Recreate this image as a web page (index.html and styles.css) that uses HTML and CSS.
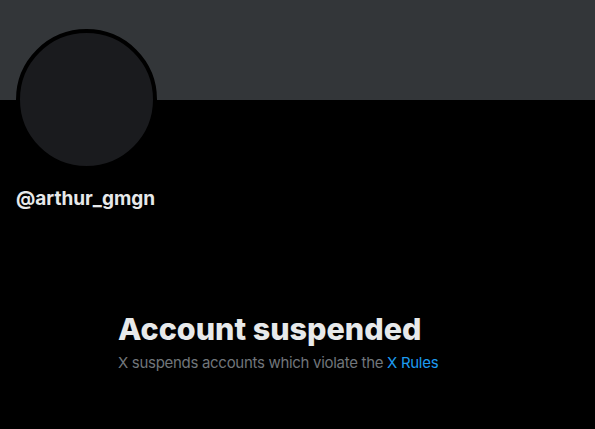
FILE: index.html
```html
<!DOCTYPE html>
<html>
<head>
<meta charset="utf-8">
<link rel="stylesheet" href="styles.css">
</head>
<body>
<div class="page">
  <div class="banner"></div>
  <div class="profile">
    <div class="avatar"></div>
    <div class="handle">@arthur_gmgn</div>
  </div>
  <div class="notice">
    <h1 class="title">Account suspended</h1>
    <p class="desc">X suspends accounts which violate the <a class="link" href="#">X Rules</a></p>
  </div>
</div>
</body>
</html>
```
FILE: styles.css
```css
html, body {
  margin: 0;
  padding: 0;
  background: #000;
}
body {
  width: 595px;
  height: 429px;
  overflow: hidden;
  font-family: Inter, "Liberation Sans", Arial, sans-serif;
  color: #e7e9ea;
}
.page {
  display: flex;
  flex-direction: column;
}
.banner {
  height: 100px;
  background: #333639;
}
.profile {
  padding: 0 16px;
  display: flex;
  flex-direction: column;
}
.avatar {
  width: 133px;
  height: 133px;
  border-radius: 50%;
  background: #1a1b1e;
  border: 4px solid #000;
  margin-top: -71px;
  margin-left: -0.5px;
}
.handle {
  margin-top: 17px;
  font-size: 19px;
  font-weight: 700;
  line-height: 24px;
  color: #e7e9ea;
}
.notice {
  padding-left: 118px;
  margin-top: 100px;
}
.title {
  margin: 0;
  font-size: 30.5px;
  font-weight: 800;
  line-height: 36px;
  color: #e7e9ea;
}
.desc {
  margin: 6px 0 0;
  font-size: 15px;
  letter-spacing: -0.3px;
  line-height: 20px;
  color: #71767b;
}
.link {
  color: #1d9bf0;
  text-decoration: none;
}
```
